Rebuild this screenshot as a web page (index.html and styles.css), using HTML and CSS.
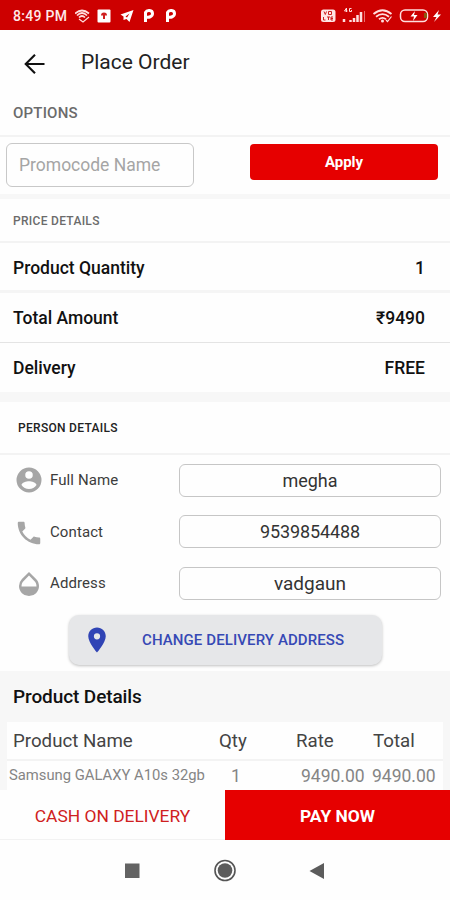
FILE: index.html
```html
<!DOCTYPE html>
<html lang="en">
<head>
<meta charset="utf-8">
<title>Place Order</title>
<link rel="stylesheet" href="styles.css">
</head>
<body>
<div class="phone">
  <div class="status">
    <span class="clock">8:49 PM</span>
    <svg class="status-left" width="106" height="16" viewBox="0 0 106 16" fill="none" stroke="#ffdede">
      <path d="M0 5.500Q7 -.5 14 5.500M2 7.500Q7 2.500 12 7.500M4 9.500Q7 6.500 10 9.500" stroke-width="1.700"/>
      <path d="M4 11l4 3 6-5" stroke-width="1.200"/>
      <rect x="22.500" y="1.500" width="13" height="13" rx="1" fill="#fff" stroke="none"/>
      <path d="M26 7.500a3 3 0 0 1 6 0zM28 7h2v4h-2z" fill="#cf2020" stroke="none"/>
      <path d="M45.500 6.500L58.500 2l-4 12-3-3-3 1v-3.500z" fill="#fff" stroke="none"/>
      <path d="M50.500 8.500l4-3-2.500 4z" fill="#cd0000" stroke="none"/>
      <path d="M70.500 14V4.500C72 1.500 77.500 2 77.500 5.500S73.500 9.500 71.500 9" stroke="#fff" stroke-width="3"/>
      <path d="M92.500 14V4.500C94 1.500 99.500 2 99.500 5.500S95.500 9.500 93.500 9" stroke="#fff" stroke-width="3"/>
    </svg>
    <svg class="status-right" width="122" height="18" viewBox="0 0 122 18" fill="none" stroke="#ffdede">
      <rect x="1" y="2.500" width="14.500" height="12.500" rx="2.500" fill="#ffe4e4" stroke="none"/>
      <path d="M4 4.500l1.300 3 1.200-3M8.500 4.500v3h3v-3zM3.500 10v3h2M7 10h3M8.500 10v3M13 10h-2v3h2M11 11.500h2" stroke="#cd2020"/>
      <path d="M26.500 1l-2 3h3M26.500 1v4M31.500 1.500h-2v3h2V3" stroke-width="1"/>
      <path d="M24 15v-3M30.500 15v-2M34 15v-4M37.500 15V8M41 15V5" stroke-width="2.500"/>
      <path d="M44.500 15V4" stroke-width="1" opacity=".5"/>
      <path d="M53.500 7Q62.500-.5 71.500 7M56 9.800Q62.500 4.500 69 9.800M59 12.300Q62.500 9.500 66 12.300" stroke-width="1.800"/>
      <circle cx="62.500" cy="14" r="1.500" fill="#ffdede" stroke="none"/>
      <path d="M66 13l1.500 1.500 4-5" stroke-width="1.200"/>
      <rect x="80.500" y="3" width="27" height="11.500" rx="4.500" stroke-width="1.500"/>
      <path d="M95 4l-4.500 5.500H94l-1 4.500 4.500-6H94z" fill="#fff" stroke="none"/>
      <path d="M105.500 6v5" stroke="#8b5a10" stroke-width="3"/>
      <path d="M119 3l-6 7h3.500L114 15l7-7.500h-3.500z" fill="#fff" stroke="none"/>
    </svg>
  </div>

  <header class="appbar">
    <svg width="22" height="22" viewBox="0 0 22 22" fill="none" stroke="#111" stroke-width="2.100"><path d="M20.500 11H2M11 1.700L1.700 11 11 20.300"/></svg>
    <h1><span>Place Order</span></h1>
  </header>

  <h2 class="options">OPTIONS</h2>
  <div class="promo">
    <div class="promo-input">Promocode Name</div>
    <div class="apply">Apply</div>
  </div>

  <h2 class="price-title">PRICE DETAILS</h2>
  <div class="price thick"><span class="w-qty">Product Quantity</span><span>1</span></div>
  <div class="price"><span>Total Amount</span><span>₹9490</span></div>
  <div class="price last"><span>Delivery</span><span>FREE</span></div>

  <h2 class="person-title">PERSON DETAILS</h2>
  <div class="person">
    <div class="field">
      <svg width="30" height="30" viewBox="0 0 24 24" fill="#a6a6a6"><path d="M12 2a10 10 0 1 0 0 20 10 10 0 0 0 0-20zm0 3a3 3 0 1 1 0 6 3 3 0 0 1 0-6zm0 14.200a7.200 7.200 0 0 1-6-3.220c.03-1.990 4-3.080 6-3.080s5.970 1.090 6 3.080a7.200 7.200 0 0 1-6 3.220z"/></svg>
      <span class="label">Full Name</span><span class="value">megha</span>
    </div>
    <div class="field">
      <svg class="call" width="30" height="30" viewBox="0 0 24 24" fill="#a6a6a6"><path d="M6.620 10.790a15.150 15.150 0 0 0 6.590 6.590l2.200-2.200c.27-.27.670-.36 1.020-.24 1.120.37 2.330.57 3.570.57.550 0 1 .45 1 1V20c0 .55-.45 1-1 1C10.610 21 3 13.390 3 4c0-.55.450-1 1-1h3.500c.55 0 1 .45 1 1 0 1.250.2 2.450.57 3.570.11.350.03.740-.25 1.020z"/></svg>
      <span class="label">Contact</span><span class="value digits">9539854488</span>
    </div>
    <div class="field">
      <svg class="drop" width="30" height="30" viewBox="0 0 24 24" fill="#a6a6a6"><path d="M17.660 8L12 2.350 6.340 8A8.020 8.020 0 0 0 4 13.640c0 2 .78 4.110 2.340 5.670a7.990 7.990 0 0 0 11.320 0C19.220 17.750 20 15.640 20 13.640S19.220 9.560 17.660 8zM6 14c.01-2 .62-3.270 1.760-4.400L12 5.270l4.240 4.380C17.380 10.770 17.990 12 18 14z"/></svg>
      <span class="label">Address</span><span class="value wide">vadgaun</span>
    </div>
    <div class="change">
      <svg width="30" height="30" viewBox="0 0 24 24" fill="#3044b5"><path d="M12 2C8.130 2 5 5.130 5 9c0 5.250 7 13 7 13s7-7.750 7-13c0-3.870-3.130-7-7-7zm0 9.500a2.500 2.500 0 1 1 0-5 2.500 2.500 0 0 1 0 5z"/></svg>
      <span>CHANGE DELIVERY ADDRESS</span>
    </div>
  </div>

  <section class="products">
    <h2>Product Details</h2>
    <div class="table">
      <div class="row head"><span>Product Name</span><span>Qty</span><span>Rate</span><span>Total</span></div>
      <div class="row item"><span>Samsung GALAXY A10s 32gb</span><span class="num">1</span><span class="num">9490.00</span><span class="num">9490.00</span></div>
    </div>
  </section>

  <div class="actions"><div class="cash">CASH ON DELIVERY</div><div class="pay">PAY NOW</div></div>
  <nav class="nav">
    <svg width="450" height="60" viewBox="0 0 450 60">
      <rect x="125" y="23.500" width="14.500" height="14.500" fill="#636363"/>
      <circle cx="225" cy="30.500" r="10" fill="none" stroke="#555" stroke-width="1.600"/>
      <circle cx="225" cy="30.500" r="7.300" fill="#5c5c5c"/>
      <path d="M324 23v16l-14.500-8z" fill="#5c5c5c"/>
    </svg>
  </nav>
</div>
</body>
</html>
```
FILE: styles.css
```css
* { box-sizing: border-box; }
body { margin: 0; background: #fff; font-family: Roboto, "Noto Sans", sans-serif; color: #111; }
h1, h2 { margin: 0; font-weight: 500; }
svg { display: block; flex: none; }
.phone { width: 450px; height: 900px; overflow: hidden; display: flex; flex-direction: column; background: #fefefe; }
.phone > * { flex: none; }

.status { height: 30px; background: #cd0000; display: flex; align-items: center; padding: 2px 8px 0 13px; color: #ffe9e9; }
.clock { width: 62px; font-size: 14px; font-weight: 500; letter-spacing: .3px; white-space: nowrap; }
.status-right { margin-left: auto; }

.appbar { height: 66px; display: flex; align-items: center; padding: 2px 0 0 24px; }
.appbar h1 { margin: -4px 0 0 35px; font-size: 21px; font-weight: 400; letter-spacing: 0; color: #222; }

.options { height: 41px; padding-left: 13px; line-height: 35px; font-size: 15px; letter-spacing: .2px; color: #6b6b6b; border-bottom: 2px solid #f3f3f3; }
.promo { height: 62px; display: flex; align-items: flex-start; justify-content: space-between; padding: 6px 12px 0 6px; border-bottom: 5px solid #f7f7f7; }
.promo-input { width: 188px; height: 44px; border: 1.500px solid #c8c8c8; border-radius: 6px; padding-left: 12px; line-height: 43px; font-size: 17.500px; color: #a5a5a5; }
.apply { width: 188px; height: 36px; margin-top: 1px; border-radius: 4px; background: #e60000; color: #fff; font-size: 15px; font-weight: 700; line-height: 37px; text-align: center; }

.price-title { height: 44px; padding-left: 13px; line-height: 45px; font-size: 12px; letter-spacing: .3px; color: #6b6b6b; border-bottom: 2px solid #f3f3f3; }
.price { height: 50px; display: flex; justify-content: space-between; padding: 0 25px 0 13px; line-height: 51px; font-size: 17.500px; font-weight: 500; border-bottom: 1px solid #e4e4e4; }
.price.thick { border-bottom: 3px solid #f5f5f5; }
.price.last { height: 59px; border-bottom: 10px solid #f7f7f7; }

.person-title { height: 53px; padding-left: 18px; line-height: 52px; font-size: 12px; letter-spacing: .3px; color: #222; border-bottom: 2px solid #f3f3f3; }
.person { height: 216px; padding: 9px 9px 0 14px; }
.field { height: 32px; margin-bottom: 19.500px; display: flex; align-items: center; }
.call, .drop { margin-top: 2px; }
.label { flex: 1; padding-left: 6px; font-size: 15px; letter-spacing: .1px; color: #3c3c3c; }
.value { width: 262px; height: 33px; border: 1.500px solid #c6c6c6; border-radius: 6px; text-align: center; line-height: 32px; font-size: 18px; color: #333; }
.value.digits { font-size: 18px; letter-spacing: -.1px; }
.value.wide { font-size: 19px; }
.change { width: 313px; height: 50px; margin: -4px 0 0 55px; border-radius: 10px; background: #e6e7e9; box-shadow: 0 1px 3px rgba(0,0,0,.25); display: flex; align-items: center; padding-left: 13px; }
.change span { margin-left: 30px; font-size: 15px; font-weight: 500; letter-spacing: .1px; color: #3649b5; white-space: nowrap; }

.products { height: 119px; padding: 0 7px; background: #f7f7f7; }
.products h2 { height: 51px; padding-left: 6px; line-height: 51px; font-size: 19px; letter-spacing: -.1px; }
.table { height: 68px; background: #fefefe; }
.row { display: grid; white-space: nowrap; }
.head { grid-template-columns: 206px 77px 77px 70px; height: 39px; line-height: 38px; padding-left: 6px; font-size: 18.700px; color: #444; border-bottom: 2px solid #f3f3f3; }
.item { grid-template-columns: 222px 70px 71px 66px; height: 29px; line-height: 29px; padding-left: 2px; font-size: 14.800px; color: #858585; }
.num { font-size: 17.500px; line-height: 31px; }

.actions { height: 50px; display: grid; grid-template: 50px / 1fr 1fr; text-align: center; line-height: 52px; font-size: 17.400px; }
.cash { background: #fefefe; color: #cf2020; border-bottom: 1px solid #f2f2f2; }
.pay { background: #e60000; color: #fff; font-weight: 700; }
.nav { height: 60px; }
```
